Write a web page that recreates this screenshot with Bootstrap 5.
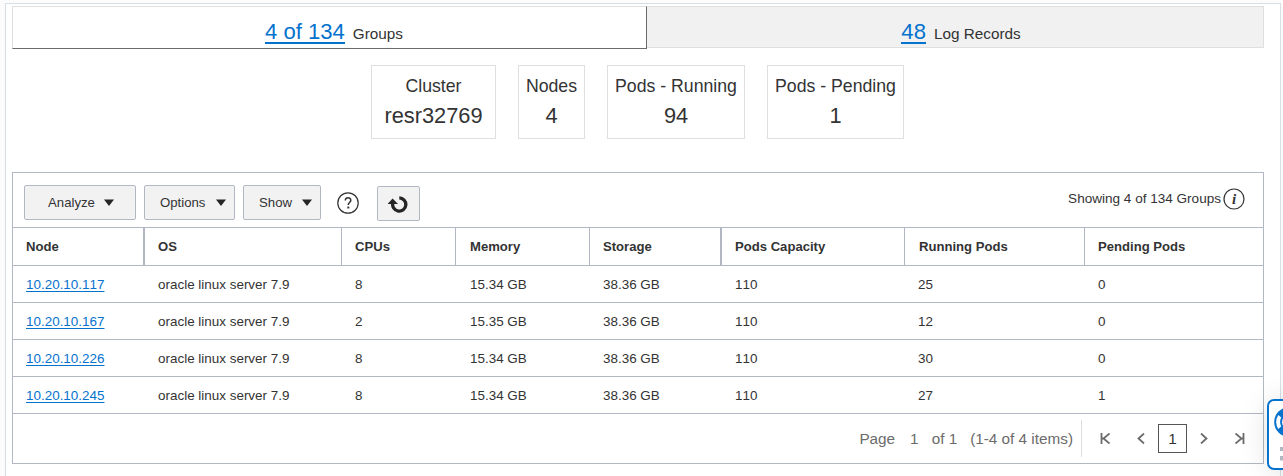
<!DOCTYPE html>
<html lang="en">
<head>
<meta charset="utf-8">
<meta name="viewport" content="width=device-width, initial-scale=1">
<title>Kubernetes Nodes</title>
<link href="https://cdn.jsdelivr.net/npm/bootstrap@5.3.0/dist/css/bootstrap.min.css" rel="stylesheet">
<style>
  :root { --line: #b2b8c3; --soft: #dfdfdf; --link: #0572ce; --ink: #333; }
  body { font-family: "Liberation Sans", Arial, sans-serif; font-size: 13.44px; line-height: 18px; font-kerning: none; color: var(--ink); background: #fcfcfd; height: 476px; overflow: hidden; }
  a { color: var(--link); }
  .panel { margin: 3px 2px 0 5px; height: 480px; padding: 2px 16px 0 6px; border: 1px solid #d6dfe6; background: #fff; }
  .tabs { height: 43px; }
  .tab-item { border: 1px solid var(--soft); font-size: 15.3px; padding: 8px 0 0 9px; }
  .tab-item a { font-size: 22.1px; line-height: 24px; margin-right: 8px; text-decoration: none; border-bottom: 2px solid var(--link); display: inline-block; height: 24px; }
  .tab-on { width: 635px; border-right-color: #6b6b6b; border-bottom-color: #6b6b6b; }
  .tab-off { background: #f1f1f1; height: 42px; border-left: 0; padding: 9px 0 0 12px; }
  .tiles { margin: 16px 0 33px 359px; gap: 22px; }
  .tile { height: 74px; border: 1px solid var(--soft); font-size: 17.7px; line-height: 24px; padding-top: 8px; white-space: nowrap; }
  .tile strong { display: block; font-weight: 400; font-size: 21.8px; line-height: 28px; margin-top: 4px; }
  .tile-a { width: 125px; } .tile-b { width: 67px; } .tile-c { width: 138px; } .tile-d { width: 137px; }
  .grid-box { width: 1252px; height: 292px; border: 1px solid var(--line); }
  .tools { height: 54px; padding: 0 18px 0 11px; }
  .tool-btn { --bs-btn-bg: #f2f2f3; --bs-btn-border-color: var(--line); --bs-btn-color: #333; --bs-btn-padding-y: 0; --bs-btn-border-radius: 2px; --bs-btn-font-size: 13.2px; height: 35px; display: flex; align-items: center; justify-content: space-between; margin-right: 8px; }
  .tool-btn svg { fill: #252525; }
  .nodes { table-layout: fixed; width: 1250px; margin: 0; border-collapse: separate; border-spacing: 0; --bs-table-color: #333; --bs-table-bg: transparent; }
  .nodes > :not(caption) > * > * { padding: 1px 0 0 13px; border: 0 solid var(--line); border-top-width: 1px; height: 37px; vertical-align: middle; }
  .nodes > * > tr > :nth-child(4), .nodes > thead > tr > :nth-child(7) { padding-left: 14px; }
  .nodes > thead > tr > th { font-size: 13.1px; height: 38px; border-right-width: 1px; white-space: nowrap; }
  .nodes > thead > tr > th.wide { border-right-width: 2px; }
  .nodes > thead > tr > th:last-child { border-right-width: 0; }
  .nodes a { text-decoration-thickness: 1px; text-underline-offset: 2px; }
  .pager { height: 50px; border-top: 1px solid var(--line); font-size: 15.3px; color: #6b6b6b; padding-right: 18px; }
  .pager svg { fill: none; stroke: #6b6b6b; stroke-width: 1.8; }
  .pager-text { height: 37px; border-right: 1px solid #dcdce0; padding-right: 8px; margin-right: 18px; }
  .pager-now { width: 29px; height: 29px; border: 1px solid #555; color: #333; margin: 0 13px; }
  .helper { position: fixed; left: 1267px; top: 399px; width: 60px; height: 71px; border: 2px solid var(--link); border-radius: 7px; background: #fff; box-shadow: 0 2px 28px rgba(0,0,0,.12); }
</style>
</head>
<body>
<main class="panel">
  <nav class="tabs d-flex align-items-start">
    <div class="tab-item tab-on h-100 d-flex align-items-center justify-content-center"><div><a href="#">4 of 134</a>Groups</div></div>
    <div class="tab-item tab-off flex-fill d-flex align-items-center justify-content-center"><div><a href="#">48</a>Log Records</div></div>
  </nav>
  <section class="tiles d-flex text-center">
    <div class="tile tile-a">Cluster<strong>resr32769</strong></div>
    <div class="tile tile-b">Nodes<strong>4</strong></div>
    <div class="tile tile-c">Pods - Running<strong>94</strong></div>
    <div class="tile tile-d">Pods - Pending<strong>1</strong></div>
  </section>
  <section class="grid-box">
    <div class="tools d-flex align-items-start">
      <div class="d-flex" style="margin-top:12px">
        <button class="btn tool-btn" style="width:112px;padding-left:23px;padding-right:21px">Analyze <svg width="10" height="7"><path d="M0 0.5H10L5 7Z"/></svg></button>
        <button class="btn tool-btn" style="width:91px;padding-left:15px;padding-right:8px">Options <svg width="10" height="7"><path d="M0 0.5H10L5 7Z"/></svg></button>
        <button class="btn tool-btn" style="width:78px;padding-left:15px;padding-right:8px">Show <svg width="10" height="7"><path d="M0 0.5H10L5 7Z"/></svg></button>
        <svg width="22" height="22" viewBox="0 0 22 22" style="margin:7px 18px 0 8px" fill="none" stroke="#333"><circle cx="11" cy="11" r="10.2" stroke-width="1.2"/><path d="M8.3 8.6C8.3 4.8 13.8 4.8 13.8 8.2C13.8 10.4 11.2 10.6 11.2 13" stroke-width="1.5"/><path d="M10.3 15.5h2" stroke-width="1.9"/></svg>
        <button class="btn tool-btn p-0 justify-content-center" style="width:43px;margin-top:1px"><svg width="22" height="18" viewBox="0 0 22 18"><path d="M11.3 2.9A6.6 6.6 0 1 1 4.8 8" style="fill:none;stroke:#252525;stroke-width:3.3"/><path d="M-.4 9L4.6 3.6L10 9Z"/></svg></button>
      </div>
      <div class="ms-auto d-flex align-items-center" style="margin-top:15px;font-size:13.55px">Showing 4 of 134 Groups
        <svg width="22" height="22" viewBox="0 0 22 22" style="margin-left:2px"><circle cx="11" cy="11" r="10" fill="none" stroke="#333" stroke-width="1.2"/><text x="11.2" y="15.5" text-anchor="middle" font-family="Liberation Serif" font-size="15" font-style="italic" font-weight="700" fill="#333">i</text></svg>
      </div>
    </div>
    <table class="table nodes">
      <colgroup><col style="width:132px"><col style="width:197px"><col style="width:114px"><col style="width:134px"><col style="width:132px"><col style="width:183px"><col style="width:180px"><col style="width:178px"></colgroup>
      <thead><tr><th class="wide">Node</th><th>OS</th><th>CPUs</th><th>Memory</th><th class="wide">Storage</th><th>Pods Capacity</th><th>Running Pods</th><th>Pending Pods</th></tr></thead>
      <tbody>
        <tr><td><a href="#">10.20.10.117</a></td><td>oracle linux server 7.9</td><td>8</td><td>15.34 GB</td><td>38.36 GB</td><td>110</td><td>25</td><td>0</td></tr>
        <tr><td><a href="#">10.20.10.167</a></td><td>oracle linux server 7.9</td><td>2</td><td>15.35 GB</td><td>38.36 GB</td><td>110</td><td>12</td><td>0</td></tr>
        <tr><td><a href="#">10.20.10.226</a></td><td>oracle linux server 7.9</td><td>8</td><td>15.34 GB</td><td>38.36 GB</td><td>110</td><td>30</td><td>0</td></tr>
        <tr><td><a href="#">10.20.10.245</a></td><td>oracle linux server 7.9</td><td>8</td><td>15.34 GB</td><td>38.36 GB</td><td>110</td><td>27</td><td>1</td></tr>
      </tbody>
    </table>
    <div class="pager d-flex align-items-center justify-content-end">
      <div class="pager-text d-flex align-items-center"><span>Page</span><span style="margin-left:15px">1</span><span style="margin-left:13px">of 1</span><span style="margin-left:13px">(1-4 of 4 items)</span></div>
      <svg width="10" height="11"><path d="M1.5 0V11M9.5.5L3.5 5.5L9.5 10.5M3 5.5H1"/></svg>
      <svg width="8" height="11" style="margin-left:27px"><path d="M7 .5L1.5 5.5L7 10.5"/></svg>
      <span class="pager-now d-flex align-items-center justify-content-center">1</span>
      <svg width="8" height="11"><path d="M1 .5L6.5 5.5L1 10.5"/></svg>
      <svg width="10" height="11" style="margin-left:27px"><path d="M8.5 0V11M.5.5L6.5 5.5L.5 10.5M7 5.5H9"/></svg>
    </div>
  </section>
</main>
<aside class="helper">
  <svg class="d-block" width="56" height="67" viewBox="0 0 56 67"><circle cx="20" cy="21" r="14.8" fill="#0572ce"/><path d="M9.3 14Q5 21 9.3 28L12.2 25.5Q10 21 12.2 16.5Z" fill="#fff"/><circle cx="20" cy="21" r="7" fill="#fff"/><path d="M11 46h30v4H11zM11 55h30v4.500H11z" fill="#b2b8c3"/></svg>
</aside>
<script src="https://cdn.jsdelivr.net/npm/bootstrap@5.3.0/dist/js/bootstrap.bundle.min.js"></script>
</body>
</html>
